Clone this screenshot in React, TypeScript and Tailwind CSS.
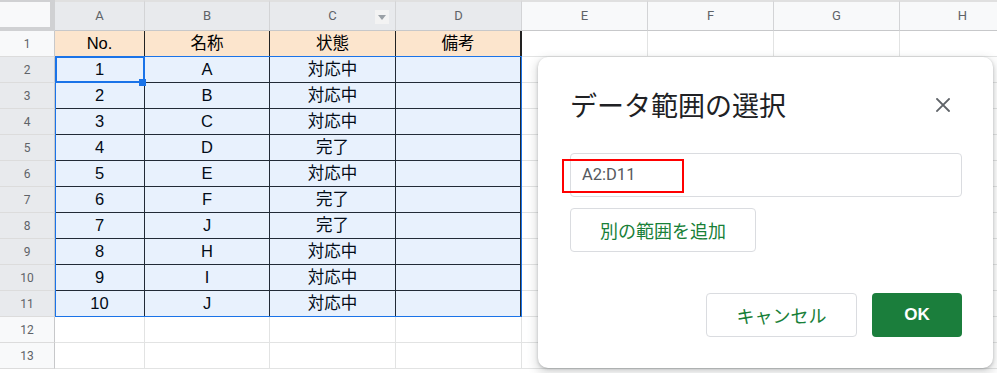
import React from 'react';

const FONT = { fontFamily: '"Liberation Sans", "Noto Sans CJK JP", sans-serif' };
const UI_FONT = { fontFamily: 'Roboto, "Noto Sans CJK JP", sans-serif' };

const colWidths = ['w-[90px]', 'w-[125px]', 'w-[126px]', 'w-[126px]', 'w-[126px]', 'w-[126px]', 'w-[126px]', 'w-[126px]'];
const colLetters = ['A', 'B', 'C', 'D', 'E', 'F', 'G', 'H'];

const data: string[][] = [
  ['No.', '名称', '状態', '備考'],
  ['1', 'A', '対応中', ''],
  ['2', 'B', '対応中', ''],
  ['3', 'C', '対応中', ''],
  ['4', 'D', '完了', ''],
  ['5', 'E', '対応中', ''],
  ['6', 'F', '完了', ''],
  ['7', 'J', '完了', ''],
  ['8', 'H', '対応中', ''],
  ['9', 'I', '対応中', ''],
  ['10', 'J', '対応中', ''],
  ['', '', '', ''],
  ['', '', '', ''],
];

function HeaderRow() {
  return (
    <div className="flex h-[31px] shrink-0">
      {/* corner */}
      <div className="w-[55px] h-[31px] shrink-0 bg-[#f8f9fa] border-t-2 border-r-[5px] border-b-[4px] border-[#d0d1d3]" />
      {colLetters.map((l, i) => (
        <div
          key={l}
          className={`${colWidths[i]} shrink-0 h-[31px] relative flex items-center justify-center border-t-2 border-t-[#e0e0e0] border-r border-b border-r-[#d3d4d6] border-b-[#c7c8ca] text-[13px] text-[#5f6368] ${i < 4 ? 'bg-[#e8eaed]' : 'bg-[#f8f9fa]'}`}
          style={UI_FONT}
        >
          {l}
          {l === 'C' && (
            <div className="absolute right-[6px] top-[8px] w-[14px] h-[14px] bg-[#f3f3f3] flex items-center justify-center">
              <svg width="8" height="5" viewBox="0 0 8 5">
                <path d="M0 0 L8 0 L4 5 Z" fill="#9aa0a6" />
              </svg>
            </div>
          )}
        </div>
      ))}
    </div>
  );
}

function DataRow({ index, cells }: { index: number; cells: string[] }) {
  const inTable = index <= 11;
  const selectedRow = index >= 2 && index <= 11;
  return (
    <div className="flex h-[26px] shrink-0">
      <div
        className={`w-[55px] shrink-0 h-[26px] flex items-center justify-center border-r border-b border-r-[#c7c8ca] border-b-[#dcdcdc] text-[12px] text-[#5f6368] ${selectedRow ? 'bg-[#e8eaed]' : 'bg-[#f8f9fa]'}`}
        style={UI_FONT}
      >
        {index}
      </div>
      {colLetters.map((l, i) => {
        const tableCell = inTable && i < 4;
        return (
          <div
            key={l}
            className={`${colWidths[i]} shrink-0 h-[26px] flex items-center justify-center border-r border-b text-[16.5px] text-black ${
              tableCell ? 'border-r-[#222] border-b-[#222]' : 'border-r-[#e2e3e3] border-b-[#e2e3e3]'
            } ${index === 1 && i < 4 ? 'bg-[#fce5cd]' : 'bg-white'} ${i === 3 && inTable ? 'border-r-2' : ''}`}
            style={FONT}
          >
            {i < 4 ? cells[i] : ''}
          </div>
        );
      })}
    </div>
  );
}

function CloseIcon() {
  return (
    <svg width="14" height="14" viewBox="0 0 14 14">
      <path d="M1 1 L13 13 M13 1 L1 13" stroke="#5f6368" strokeWidth="1.8" strokeLinecap="square" />
    </svg>
  );
}

export default function App() {
  return (
    <div className="relative w-[997px] h-[373px] overflow-hidden bg-white">
      {/* Sheet grid */}
      <div className="flex flex-col">
        <HeaderRow />
        {data.map((cells, i) => (
          <DataRow key={i} index={i + 1} cells={cells} />
        ))}
      </div>

      {/* Selection range A2:D11 */}
      <div className="absolute left-[55px] top-[56px] w-[467px] h-[261px] border border-[#1a73e8] bg-[rgba(26,115,232,0.1)] pointer-events-none" />
      {/* Active cell */}
      <div className="absolute left-[55px] top-[56px] w-[90px] h-[27px] border-2 border-[#1a73e8] pointer-events-none" />
      <div className="absolute left-[139px] top-[79px] w-[7px] h-[7px] bg-[#1a73e8]" />

      {/* Dialog */}
      <div
        className="absolute left-[538px] top-[57px] w-[455px] h-[311px] rounded-[10px] bg-white shadow-[0_4px_8px_3px_rgba(60,64,67,0.15),0_1px_3px_rgba(60,64,67,0.3)] pl-[32px] pr-[31px] pt-[30px] flex flex-col"
        style={UI_FONT}
      >
        <div className="flex items-center justify-between h-[36px]">
          <div className="text-[27px] leading-[36px] text-[#202124]" style={{ fontFamily: '"Noto Sans CJK JP", sans-serif' }}>
            データ範囲の選択
          </div>
          <div className="w-6 h-6 mr-[7px] flex items-center justify-center">
            <CloseIcon />
          </div>
        </div>

        <div className="relative mt-[30px] h-[44px] rounded-[4px] border border-[#dadce0] flex items-center pl-[11px] text-[16.5px] text-[#55595e]">
          A2:D11
          <div className="absolute left-[-9px] top-[5px] w-[122px] h-[34px] border-2 border-[#ff0000]" />
        </div>

        <div className="mt-[11px]">
          <div
            className="w-[186px] h-[44px] rounded-[4px] border border-[#dadce0] flex items-center justify-center text-[18px] text-[#188038]"
            style={{ fontFamily: '"Noto Sans CJK JP", sans-serif' }}
          >
            別の範囲を追加
          </div>
        </div>

        <div className="mt-[41px] flex justify-end gap-[15px]">
          <div
            className="w-[151px] h-[44px] rounded-[4px] border border-[#dadce0] flex items-center justify-center text-[18px] text-[#188038]"
            style={{ fontFamily: '"Noto Sans CJK JP", sans-serif' }}
          >
            キャンセル
          </div>
          <div
            className="w-[90px] h-[44px] rounded-[4px] bg-[#1b7e3c] flex items-center justify-center text-[17px] font-bold text-white"
            style={{ fontFamily: '"Liberation Sans", Arial, sans-serif' }}
          >
            OK
          </div>
        </div>
      </div>
    </div>
  );
}
